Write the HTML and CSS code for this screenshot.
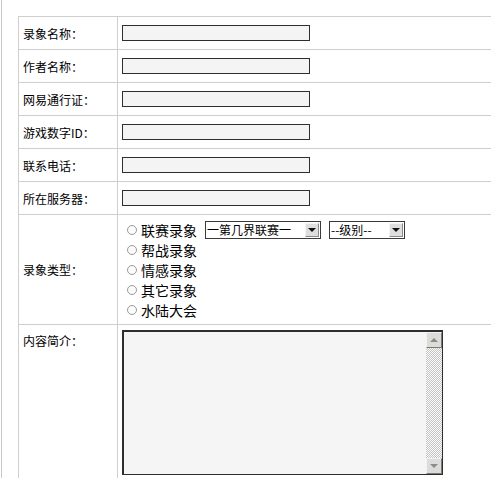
FILE: index.html
```html
<!DOCTYPE html>
<html lang="zh-CN">
<head>
<meta charset="utf-8">
<title>录象上传</title>
<link rel="stylesheet" href="styles.css">
</head>
<body>
<div class="page">
  <div class="form">
    <div class="cell label">录象名称：</div>
    <div class="cell field"><input class="text" type="text"></div>

    <div class="cell label">作者名称：</div>
    <div class="cell field"><input class="text" type="text"></div>

    <div class="cell label">网易通行证：</div>
    <div class="cell field"><input class="text" type="text"></div>

    <div class="cell label">游戏数字ID：</div>
    <div class="cell field"><input class="text" type="text"></div>

    <div class="cell label">联系电话：</div>
    <div class="cell field"><input class="text" type="text"></div>

    <div class="cell label">所在服务器：</div>
    <div class="cell field"><input class="text" type="text"></div>

    <div class="cell label">录象类型：</div>
    <div class="cell field types">
      <div class="opt">
        <span class="radio"></span><span class="opt-text">联赛录象</span>
        <span class="select w1"><span class="val">一第几界联赛一</span><span class="arrow"></span></span>
        <span class="select w2"><span class="val">--级别--</span><span class="arrow"></span></span>
      </div>
      <div class="opt"><span class="radio"></span><span class="opt-text">帮战录象</span></div>
      <div class="opt"><span class="radio"></span><span class="opt-text">情感录象</span></div>
      <div class="opt"><span class="radio"></span><span class="opt-text">其它录象</span></div>
      <div class="opt"><span class="radio"></span><span class="opt-text">水陆大会</span></div>
    </div>

    <div class="cell label top last">内容简介：</div>
    <div class="cell field area-cell last">
      <div class="area">
        <textarea></textarea>
        <div class="sb">
          <span class="btn up"></span>
          <span class="track"></span>
          <span class="btn down"></span>
        </div>
      </div>
    </div>
  </div>
</div>
</body>
</html>
```

FILE: styles.css
```css
html, body {
  margin: 0;
  height: 100%;
  overflow: hidden;
  background: #fff;
}

body {
  font: 12px "Noto Sans CJK SC", "Noto Sans", sans-serif;
  color: #000;
}

.page {
  box-sizing: border-box;
  height: 100%;
  margin-left: 1px;
  border-left: 1px solid #c8c8c8;
  padding: 16px 0 0 16px;
}

.form {
  box-sizing: border-box;
  display: grid;
  grid-template-columns: 99px 1fr;
  grid-template-rows: repeat(6, 33px) 110px 1fr;
  height: 100%;
  border-top: 1px solid #cfcfcf;
  border-left: 1px solid #cfcfcf;
}

.cell {
  box-sizing: border-box;
  display: flex;
  align-items: center;
  border-bottom: 1px solid #cfcfcf;
  padding-left: 4px;
}

.label {
  white-space: nowrap;
  border-right: 1px solid #cfcfcf;
}

.cell.last {
  border-bottom: 0;
}

.label.top {
  align-items: flex-start;
  padding-top: 7px;
}

.text {
  box-sizing: border-box;
  width: 188px;
  height: 16px;
  margin: 0;
  padding: 0;
  border: 1px solid #2e2e2e;
  background: #f4f4f4;
}

.types {
  flex-direction: column;
  align-items: flex-start;
  justify-content: flex-start;
  padding-top: 5px;
}

.opt {
  display: flex;
  align-items: center;
  height: 20px;
  font-size: 14px;
}

.radio {
  box-sizing: border-box;
  width: 10px;
  height: 10px;
  margin-left: 5px;
  margin-right: 4px;
  border: 1px solid #9a9a9a;
  border-radius: 50%;
  background: #fafafa;
}

.opt-text {
  line-height: 20px;
}

.select {
  box-sizing: border-box;
  display: inline-flex;
  align-items: center;
  height: 18px;
  margin-left: 8px;
  border: 1px solid #3a3a3a;
  background: #fff;
  font-size: 12px;
}

.w1 { width: 116px; }
.w2 { width: 76px; }

.val {
  flex: 1;
  padding-left: 1px;
  white-space: nowrap;
  overflow: hidden;
  line-height: 16px;
}

.arrow {
  box-sizing: border-box;
  position: relative;
  width: 14px;
  height: 14px;
  margin: 1px;
  background: #dedede;
  border: 1px solid;
  border-color: #f4f4f4 #8a8a8a #8a8a8a #f4f4f4;
}

.arrow::after {
  content: "";
  position: absolute;
  left: 2px;
  top: 4px;
  border-left: 4px solid transparent;
  border-right: 4px solid transparent;
  border-top: 4px solid #111;
}

.area-cell {
  align-items: flex-start;
  padding-top: 5px;
}

.area {
  box-sizing: border-box;
  display: flex;
  width: 321px;
  height: 145px;
  border: 1px solid #2e2e2e;
  border-top-width: 2px;
  border-left-width: 2px;
}

.area textarea {
  flex: 1;
  margin: 0;
  padding: 0;
  border: 0;
  background: #f5f5f5;
  resize: none;
  outline: none;
}

.sb {
  display: flex;
  flex-direction: column;
  width: 16px;
  background: repeating-conic-gradient(#c4c4c4 0 25%, #fbfbfb 0 50%) 0 0 / 2px 2px;
}

.track {
  flex: 1;
}

.btn {
  box-sizing: border-box;
  position: relative;
  height: 16px;
  background: #dcdcd8;
  border: 1px solid;
  border-color: #f2f2f2 #7a7a7a #7a7a7a #f2f2f2;
}

.btn::after {
  content: "";
  position: absolute;
  left: 3px;
  top: 5px;
  border-left: 4px solid transparent;
  border-right: 4px solid transparent;
}

.up::after {
  border-bottom: 4px solid #8c8c8c;
}

.down::after {
  border-top: 4px solid #8c8c8c;
}
```
